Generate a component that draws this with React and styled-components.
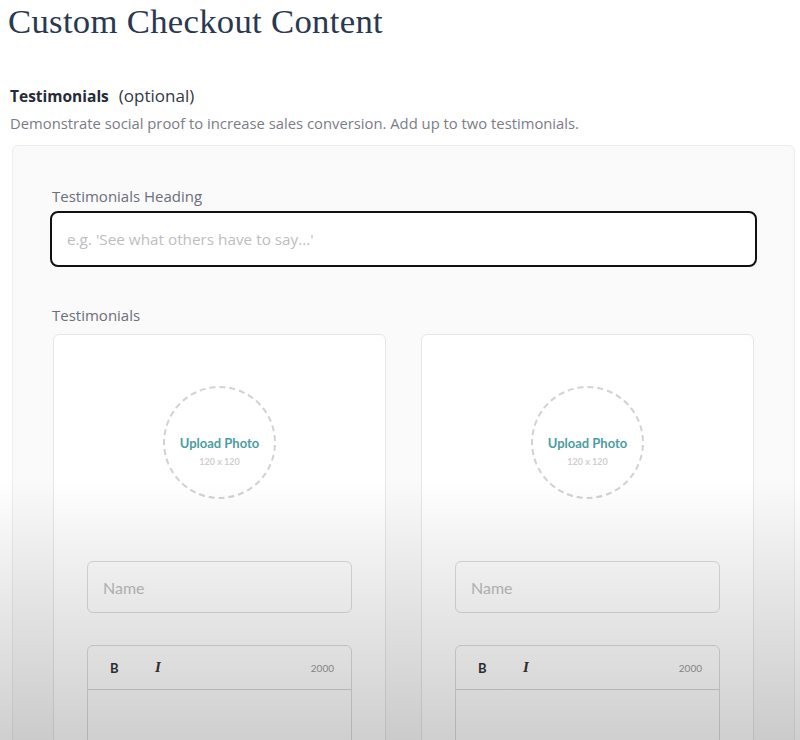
import React from "react";
import styled, { createGlobalStyle } from "styled-components";

const Global = createGlobalStyle`
  html, body { margin: 0; padding: 0; background: #ffffff; }
  body { font-family: "Open Sans", "Liberation Sans", sans-serif; overflow: hidden; }
  * { box-sizing: border-box; }
`;

const Page = styled.div`
  position: relative;
  width: 800px;
  height: 740px;
  overflow: hidden;
  padding: 0 5px 0 10px;
`;

const Title = styled.h1`
  margin: 0;
  padding-top: 2px;
  margin-left: -2px;
  font-family: "Liberation Serif", "DejaVu Serif", serif;
  font-weight: 400;
  font-size: 34.7px;
  line-height: 40px;
  color: #2a3850;
  letter-spacing: 0.3px;
`;

const Section = styled.section`
  margin-top: 43px;
`;

const SectionHeading = styled.h2`
  margin: 0;
  font-size: 15.5px;
  line-height: 22px;
  font-weight: 700;
  color: #262b36;
  span { font-weight: 400; margin-left: 10px; color: #333845; font-size: 17px; }
`;

const Description = styled.p`
  margin: 5px 0 0;
  font-size: 14.8px;
  line-height: 22px;
  color: #7a7d86;
`;

const Panel = styled.div`
  margin-top: 11px;
  margin-left: 2px;
  background: #fafafa;
  border: 1px solid #ececec;
  border-radius: 6px;
  padding: 40px 37px 0 37px;
  height: 700px;
`;

const Label = styled.div`
  font-size: 15px;
  line-height: 20px;
  color: #6c6f7a;
  padding-left: 2px;
  margin-top: ${(p) => p.$top || 0}px;
`;

const HeadingInput = styled.div`
  margin-top: 5px;
  height: 56px;
  background: #ffffff;
  border: 2px solid #111;
  border-radius: 8px;
  display: flex;
  align-items: center;
  padding-left: 15px;
  font-size: 15.3px;
  color: #bdbdc2;
`;

const Cards = styled.div`
  margin-top: 9px;
  padding: 0 3px;
  display: grid;
  grid-template-columns: 1fr 1fr;
  column-gap: 35px;
`;

const Card = styled.div`
  background: #ffffff;
  border: 1px solid #e6e6e6;
  border-radius: 6px;
  padding: 51px 33px 0;
  height: 500px;
  display: flex;
  flex-direction: column;
  align-items: stretch;
  font-family: Lato, "Open Sans", sans-serif;
  & > * { flex-shrink: 0; }
`;

const Upload = styled.div`
  align-self: center;
  width: 113px;
  height: 113px;
  border: 2px dashed #d2d2d2;
  border-radius: 50%;
  display: flex;
  flex-direction: column;
  align-items: center;
  justify-content: center;
  padding-top: 17px;
`;

const UploadText = styled.div`
  font-size: 13px;
  font-weight: 700;
  color: #4a9ea0;
  line-height: 16px;
`;

const UploadSize = styled.div`
  margin-top: 5px;
  font-size: 9px;
  font-weight: 700;
  color: #cfcfcf;
  line-height: 11px;
`;

const NameInput = styled.div`
  margin-top: 62px;
  height: 52px;
  border: 1px solid #dcdcdc;
  border-radius: 6px;
  background: #ffffff;
  display: flex;
  align-items: center;
  padding-left: 15px;
  font-size: 16px;
  color: #bdbdbd;
`;

const Editor = styled.div`
  margin-top: 32px;
  border: 1px solid #dcdcdc;
  border-radius: 6px;
  background: #ffffff;
  height: 200px;
  display: flex;
  flex-direction: column;
`;

const Toolbar = styled.div`
  height: 44px;
  border-bottom: 1px solid #d6d6d6;
  display: flex;
  align-items: center;
  padding: 0 17px 0 22px;
`;

const ToolButton = styled.span`
  font-family: ${(p) => (p.$italic ? '"Liberation Serif", serif' : 'Lato, sans-serif')};
  font-weight: 700;
  font-style: ${(p) => (p.$italic ? "italic" : "normal")};
  font-size: ${(p) => (p.$italic ? 15 : 13)}px;
  color: #333;
  width: 45px;
`;

const Counter = styled.span`
  margin-left: auto;
  font-size: 10px;
  color: #9a9a9a;
`;

const Fade = styled.div`
  position: absolute;
  left: 0;
  right: 0;
  top: 480px;
  bottom: 0;
  pointer-events: none;
  background: linear-gradient(to bottom, rgba(0,0,0,0) 0%, rgba(0,0,0,0.06) 30%, rgba(0,0,0,0.19) 100%);
`;

function TestimonialCard() {
  return (
    <Card>
      <Upload>
        <UploadText>Upload Photo</UploadText>
        <UploadSize>120 x 120</UploadSize>
      </Upload>
      <NameInput>Name</NameInput>
      <Editor>
        <Toolbar>
          <ToolButton>B</ToolButton>
          <ToolButton $italic>I</ToolButton>
          <Counter>2000</Counter>
        </Toolbar>
      </Editor>
    </Card>
  );
}

export default function App() {
  return (
    <>
      <Global />
      <Page>
        <Title>Custom Checkout Content</Title>
        <Section>
          <SectionHeading>
            Testimonials<span>(optional)</span>
          </SectionHeading>
          <Description>
            Demonstrate social proof to increase sales conversion. Add up to two testimonials.
          </Description>
          <Panel>
            <Label>Testimonials Heading</Label>
            <HeadingInput>e.g. 'See what others have to say...'</HeadingInput>
            <Label $top={38}>Testimonials</Label>
            <Cards>
              <TestimonialCard />
              <TestimonialCard />
            </Cards>
          </Panel>
        </Section>
        <Fade />
      </Page>
    </>
  );
}
